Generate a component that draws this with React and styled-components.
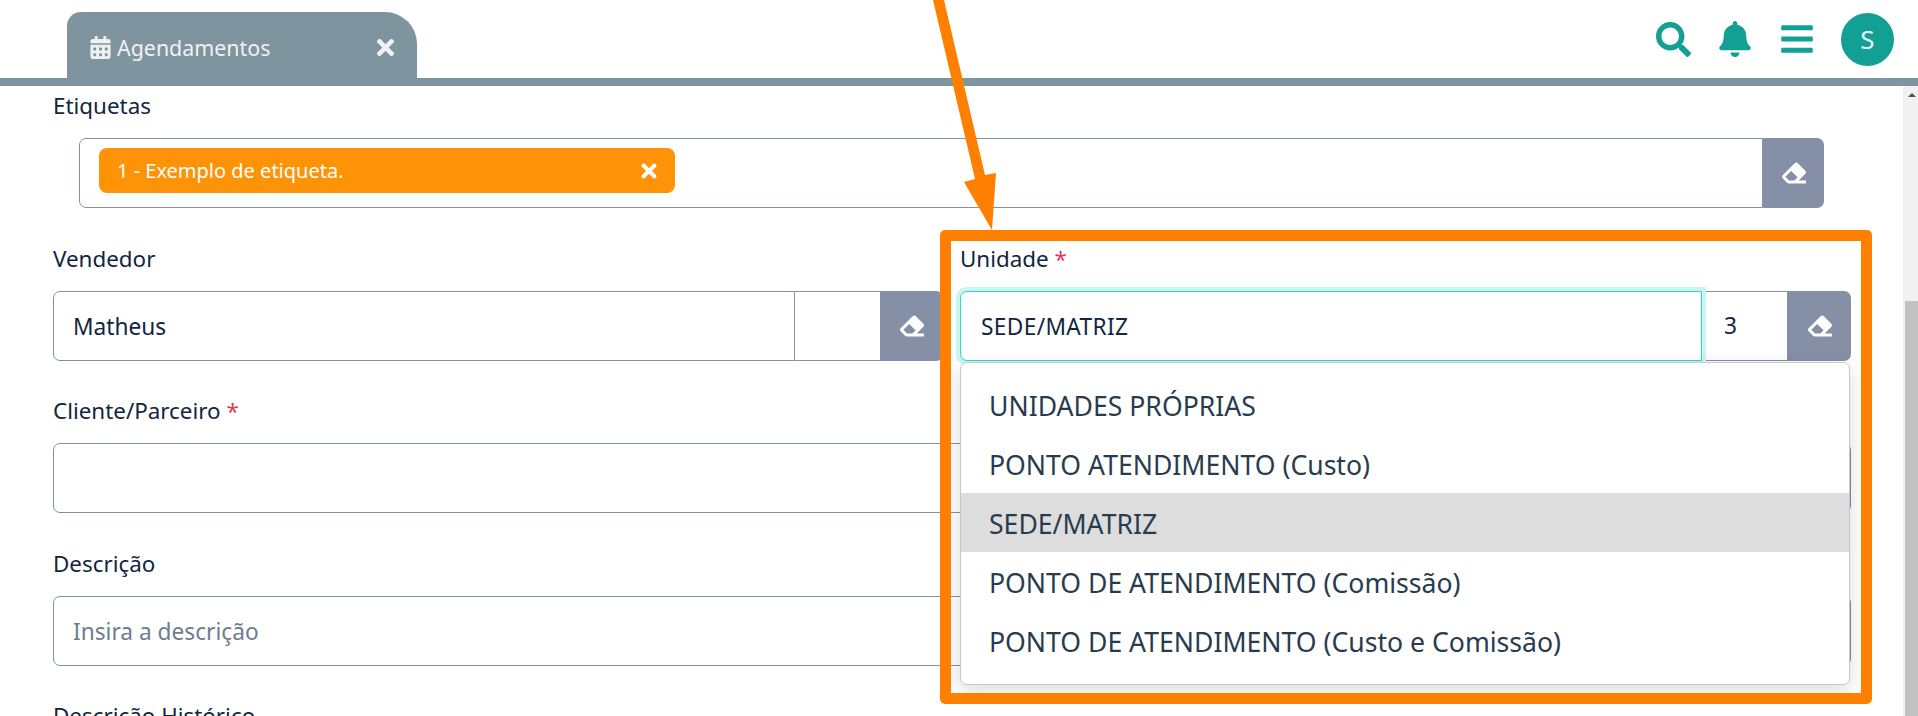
import styled, { createGlobalStyle } from "styled-components";
import { FaBars, FaBell, FaCalendarAlt, FaEraser, FaSearch, FaTimes } from "react-icons/fa";

const GlobalStyle = createGlobalStyle`
  html, body { margin: 0; height: 100%; overflow: hidden; background: #fff; }
  body { font-family: "Noto Sans", "Open Sans", sans-serif; color: #12263f; }
  * { box-sizing: border-box; }
`;

const Page = styled.div`
  position: relative;
  display: flex;
  flex-direction: column;
  height: 100vh;
  overflow: hidden;
`;

const Header = styled.header`
  display: flex;
  align-items: flex-end;
  justify-content: space-between;
  height: 86px;
  padding: 0 24px 0 67px;
  border-bottom: 8px solid #7e949e;
  flex: none;
`;

const Tab = styled.div`
  display: flex;
  align-items: center;
  width: 350px;
  height: 66px;
  padding: 5px 19px 0 22px;
  background: #7e949e;
  border-radius: 14px 32px 0 0;
  color: #f1f1f1;
  font-size: 21.4px;
  svg { flex: none; }
`;

const TabTitle = styled.span`
  flex: 1;
  margin-left: 5px;
  padding-bottom: 1px;
`;

const Actions = styled.div`
  display: flex;
  align-items: center;
  gap: 26px;
  height: 78px;
  color: #12a094;
`;

const Avatar = styled.div`
  display: flex;
  align-items: center;
  justify-content: center;
  width: 53px;
  height: 53px;
  border-radius: 50%;
  background: #12a094;
  color: #e8f6f4;
  font-size: 26px;
`;

const Main = styled.div`
  display: flex;
  flex: 1;
  min-height: 0;
`;

const Content = styled.main`
  flex: 1;
  min-width: 0;
  padding: 6px 52px 0 53px;
  overflow: hidden;
`;

const Scrollbar = styled.div`
  display: flex;
  flex-direction: column;
  width: 15px;
  padding-left: 2px;
  background: #f1f1f1;
  flex: none;
`;

const ScrollTrack = styled.div`
  display: flex;
  justify-content: center;
  height: 215px;
  padding-top: 7px;
  flex: none;
`;

const ScrollArrow = styled.div`
  width: 0;
  height: 0;
  border-left: 4px solid transparent;
  border-right: 4px solid transparent;
  border-bottom: 4px solid #505050;
`;

const ScrollThumb = styled.div`
  flex: 1;
  background: #c1c1c1;
`;

const Columns = styled.div`
  display: grid;
  grid-template-columns: 890px 891px;
  column-gap: 17px;
`;

const Field = styled.div`
  position: relative;
  margin-bottom: 36.5px;
`;

const Label = styled.label`
  display: block;
  height: 28px;
  margin-bottom: 18px;
  font-size: 22.4px;
  line-height: 28px;
  white-space: nowrap;
`;

const Required = styled.span`
  color: #e63757;
`;

const Group = styled.div`
  position: relative;
  display: flex;
  height: 70px;
  margin: 0 ${(p) => (p.$inset ? "27px 0 26px" : "0")};
`;

const Input = styled.div`
  position: relative;
  display: flex;
  align-items: center;
  flex: 1;
  min-width: 0;
  padding-left: ${(p) => (p.$focused ? "20px" : "19px")};
  padding-top: 1px;
  background: #fff;
  border: 1px solid ${(p) => (p.$focused ? "#2dd9cc" : "#8590a6")};
  border-radius: ${(p) => (p.$full ? "7px" : "7px 0 0 7px")};
  box-shadow: ${(p) => (p.$focused ? "0 0 0 4px #c8f6f1" : "none")};
  z-index: ${(p) => (p.$focused ? 1 : 0)};
  font-size: 22.7px;
  letter-spacing: ${(p) => (p.$focused ? "0.35px" : "0")};
`;

const Placeholder = styled.span`
  color: #6e7d90;
`;

const TagInput = styled(Input)`
  padding: 0 0 5px 19px;
`;

const Tag = styled.div`
  display: flex;
  align-items: center;
  justify-content: space-between;
  width: 576px;
  height: 45px;
  padding: 0 15px 0 18px;
  background: #ff9307;
  border-radius: 8px;
  color: #fff;
  font-size: 20px;
`;

const CodeCell = styled.div`
  display: flex;
  align-items: center;
  width: 86px;
  padding-left: 22px;
  border: 1px solid #8590a6;
  border-left: 0;
  font-size: 22.7px;
`;

const ClearButton = styled.button`
  display: flex;
  align-items: center;
  justify-content: center;
  width: ${(p) => p.$width}px;
  padding: 0;
  background: #8590a6;
  border: 0;
  border-radius: 0 7px 7px 0;
  color: #fff;
`;

const Dropdown = styled.ul`
  position: absolute;
  top: 71px;
  left: 0;
  right: 1px;
  margin: 0;
  padding: 12px 0 14px;
  list-style: none;
  background: #fff;
  border: 1px solid #c8c8c8;
  border-radius: 7px;
  box-shadow: 0 6px 20px rgba(0, 0, 0, 0.14);
  z-index: 5;
`;

const Option = styled.li`
  display: flex;
  align-items: center;
  height: 59px;
  padding: 3px 0 0 28px;
  background: ${(p) => (p.$selected ? "#dddddd" : "transparent")};
  color: #283c4e;
  font-size: 26.6px;
`;

// anotacao laranja por cima da tela
const Highlight = styled.div`
  position: absolute;
  top: 230px;
  left: 940px;
  width: 932px;
  height: 474px;
  border: 11px solid #ff8000;
  border-radius: 5px;
  pointer-events: none;
  z-index: 10;
`;

const ArrowSvg = styled.svg`
  position: absolute;
  top: 0;
  left: 920px;
  z-index: 10;
`;

const units = [
  "UNIDADES PRÓPRIAS",
  "PONTO ATENDIMENTO (Custo)",
  "SEDE/MATRIZ",
  "PONTO DE ATENDIMENTO (Comissão)",
  "PONTO DE ATENDIMENTO (Custo e Comissão)",
];

const App = () => {
  return (
    <Page>
      <GlobalStyle />
      <Header>
        <Tab>
          <FaCalendarAlt size={23} />
          <TabTitle>Agendamentos</TabTitle>
          <FaTimes size={25} />
        </Tab>
        <Actions>
          <FaSearch size={35} />
          <FaBell size={36} />
          <FaBars size={36} />
          <Avatar>S</Avatar>
        </Actions>
      </Header>

      <Main>
        <Content>
          <Field>
            <Label>Etiquetas</Label>
            <Group $inset>
              <TagInput>
                <Tag>
                  1 - Exemplo de etiqueta.
                  <FaTimes size={22} />
                </Tag>
              </TagInput>
              <ClearButton $width={61}><FaEraser size={24} /></ClearButton>
            </Group>
          </Field>

          <Columns>
            <Field>
              <Label>Vendedor</Label>
              <Group>
                <Input>Matheus</Input>
                <CodeCell />
                <ClearButton $width={62}><FaEraser size={24} /></ClearButton>
              </Group>
            </Field>
            <Field>
              <Label>Unidade <Required>*</Required></Label>
              <Group>
                <Input $focused>SEDE/MATRIZ</Input>
                <CodeCell>3</CodeCell>
                <ClearButton $width={63}><FaEraser size={24} /></ClearButton>
                <Dropdown>
                  {units.map((unit) => (
                    <Option key={unit} $selected={unit === "SEDE/MATRIZ"}>{unit}</Option>
                  ))}
                </Dropdown>
              </Group>
            </Field>
          </Columns>

          <Field>
            <Label>Cliente/Parceiro <Required>*</Required></Label>
            <Group><Input $full /></Group>
          </Field>

          <Field>
            <Label>Descrição</Label>
            <Group><Input $full><Placeholder>Insira a descrição</Placeholder></Input></Group>
          </Field>

          <Field>
            <Label>Descrição Histórico</Label>
          </Field>
        </Content>
        <Scrollbar>
          <ScrollTrack><ScrollArrow /></ScrollTrack>
          <ScrollThumb />
        </Scrollbar>
      </Main>

      <ArrowSvg width="90" height="232" viewBox="0 0 90 232">
        <polygon points="13,0 24,0 65,175 76,173 72,230 44,182 55,179" fill="#ff8000" />
      </ArrowSvg>
      <Highlight />
    </Page>
  );
};

export default App;
